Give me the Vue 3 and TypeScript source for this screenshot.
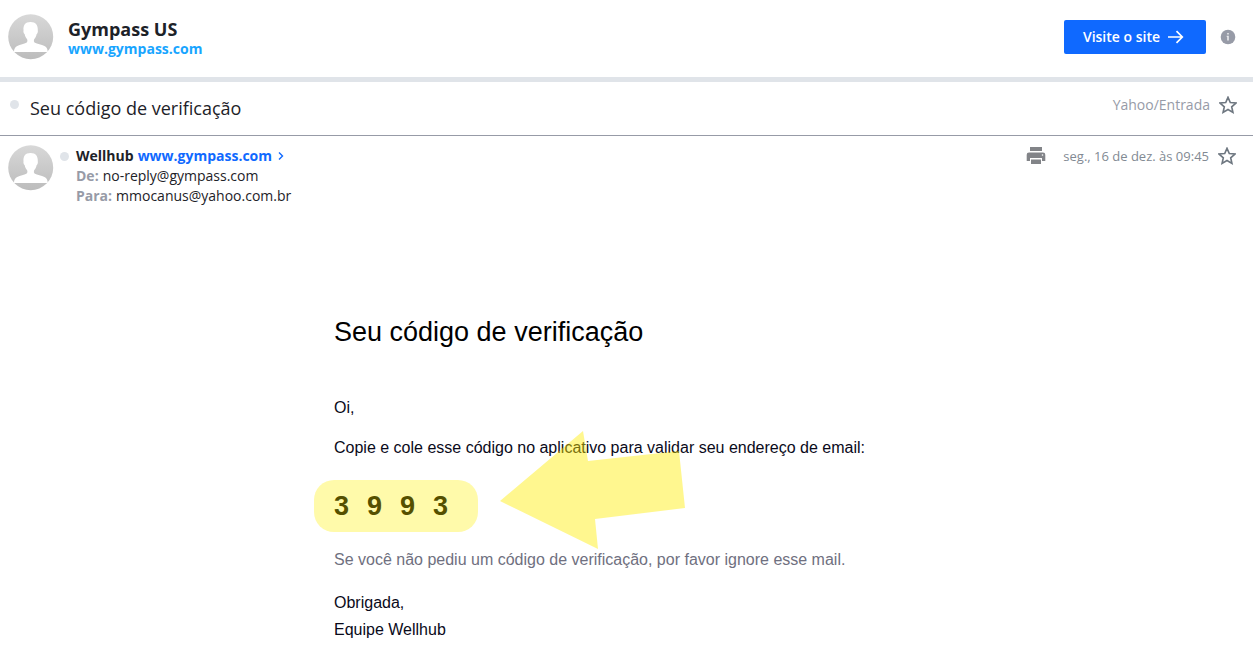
<script setup lang="ts">
const digits: string[] = ['3', '9', '9', '3']
const starPath =
  'M12 2.6l2.8 6.3 6.9.7-5.2 4.6 1.5 6.8-6-3.5-6 3.5 1.5-6.8-5.2-4.6 6.9-.7z'
</script>

<template>
  <main class="mail">
    <svg class="defs" width="0" height="0" aria-hidden="true">
      <defs>
        <linearGradient id="avatar-shade" x1="0" y1="0" x2="0" y2="1">
          <stop offset="0" stop-color="#d8d8d8" />
          <stop offset="1" stop-color="#bcbcbc" />
        </linearGradient>
        <symbol id="avatar" viewBox="0 0 46 46">
          <circle cx="22.7" cy="22.7" r="22.5" fill="url(#avatar-shade)" />
          <path
            d="M6 38c0-2.500.8-4.700 3.200-5.900 3-1.500 7-2.200 9.200-3.300 1.300-.7 1.200-2.600.6-3.800-1.300-1.200-2-2.900-2.300-4.700-1-.5-1.500-2.600-1.200-4C15.200 11.500 17 8 22.500 8s7.500 3.500 7.300 8.300c.3 1.400-.2 3.500-1.200 4-.3 1.800-1 3.500-2.300 4.700-.6 1.200-.7 3.100.6 3.800 2.200 1.100 6.600 1.800 9.600 3.300 2.400 1.200 3.200 3.400 3.200 5.900z"
            fill="#fff"
          />
        </symbol>
      </defs>
    </svg>

    <header class="brand">
      <svg class="avatar" aria-hidden="true"><use href="#avatar" /></svg>
      <div class="brand-text">
        <strong class="brand-name">Gympass US</strong>
        <a class="brand-link" href="#">www.gympass.com</a>
      </div>
      <button class="visit" type="button">
        Visite o site
        <svg width="16" height="14" viewBox="0 0 16 14" aria-hidden="true">
          <path d="M0 7h14M8.500 1.200L14.300 7l-5.800 5.800" fill="none" stroke="#fff" stroke-width="1.700" />
        </svg>
      </button>
      <button class="icon-button" type="button" aria-label="Informações">
        <svg width="16" height="16" viewBox="0 0 16 16" aria-hidden="true">
          <circle cx="8" cy="8" r="7.300" fill="#979ba7" />
          <path d="M7.200 4h1.600v1.600H7.200zM6.700 6.800h2.100v4.600H7.200V8h-.5z" fill="#e9eaed" />
        </svg>
      </button>
    </header>

    <section class="subject">
      <span class="dot"></span>
      <h1 class="subject-title">Seu código de verificação</h1>
      <span class="folder">Yahoo/Entrada</span>
      <button class="icon-button" type="button" aria-label="Marcar conversa">
        <svg width="18" height="18" viewBox="1 1 22 22" aria-hidden="true">
          <path :d="starPath" fill="none" stroke="#6e7780" stroke-width="2" />
        </svg>
      </button>
    </section>

    <section class="sender">
      <svg class="avatar" aria-hidden="true"><use href="#avatar" /></svg>
      <span class="dot"></span>
      <div class="sender-text">
        <div class="line">
          <strong>Wellhub</strong>
          <a class="sender-link" href="#">www.gympass.com</a>
          <svg class="chevron" width="6" height="10" viewBox="0 0 6 10" aria-hidden="true">
            <path d="M1 1.500L4.500 5 1 8.500" fill="none" stroke="#0f69ff" stroke-width="1.400" />
          </svg>
        </div>
        <div class="line"><b class="label">De:</b><span>no-reply@gympass.com</span></div>
        <div class="line"><b class="label">Para:</b><span>mmocanus@yahoo.com.br</span></div>
      </div>
      <div class="tools">
        <button class="icon-button print" type="button" aria-label="Imprimir">
          <svg width="20" height="18" viewBox="0 0 20 18" aria-hidden="true">
            <g fill="#828488">
              <path d="M4 0h12v4H4z" />
              <path d="M3 5.500h14a2.300 2.300 0 0 1 2.300 2.300V14H16v-3H4v3H.7V7.800A2.300 2.300 0 0 1 3 5.500z" />
              <path d="M5 12.500h10V17H5z" />
            </g>
            <circle cx="16.500" cy="8" r=".8" fill="#fff" />
          </svg>
        </button>
        <time class="date">seg., 16 de dez. às 09:45</time>
        <button class="icon-button" type="button" aria-label="Marcar mensagem">
          <svg width="18" height="18" viewBox="1 1 22 22" aria-hidden="true">
            <path :d="starPath" fill="none" stroke="#6e7780" stroke-width="2" />
          </svg>
        </button>
      </div>
    </section>

    <article class="message">
      <h2 class="title">Seu código de verificação</h2>
      <p class="greeting">Oi,</p>
      <p class="intro">Copie e cole esse código no aplicativo para validar seu endereço de email:</p>
      <div class="code">
        <span v-for="(digit, i) in digits" :key="i">{{ digit }}</span>
        <svg class="arrow" width="185" height="118" viewBox="0 0 185 118" aria-hidden="true">
          <path d="M0 70L83 0l5 30 91-10 6 57-90 11 3 30z" fill="#ffed00" fill-opacity=".44" />
        </svg>
      </div>
      <p class="note">Se você não pediu um código de verificação, por favor ignore esse mail.</p>
      <p class="sign">Obrigada,<br />Equipe Wellhub</p>
    </article>
  </main>
</template>

<style>
body {
  margin: 0;
  background: #fff;
}
</style>

<style scoped>
.mail {
  font-family: "Open Sans", "Noto Sans", sans-serif;
  font-size: 14px;
  line-height: 20px;
  color: #1d2228;
}
.defs {
  display: block;
}
.avatar {
  flex: none;
  width: 46px;
  height: 46px;
}
.brand {
  display: flex;
  align-items: center;
  box-sizing: border-box;
  height: 82px;
  padding: 0 17px 4px 8px;
  border-bottom: 5px solid #e0e4e9;
}
.brand-text {
  display: flex;
  flex-direction: column;
  margin: 4px auto 0 14px;
}
.brand-name {
  font-size: 18px;
}
.brand-link {
  font-weight: 700;
  color: #18a5ff;
  text-decoration: none;
}
.visit {
  display: flex;
  align-items: center;
  justify-content: center;
  gap: 8px;
  height: 34px;
  margin: 0 14px 0 0;
  padding: 0 22px 0 19px;
  border: 0;
  border-radius: 2px;
  background: #0f69ff;
  color: #fff;
  font: 600 14px "Open Sans", "Noto Sans", sans-serif;
}
.icon-button {
  display: flex;
  align-items: center;
  justify-content: center;
  padding: 0;
  border: 0;
  background: none;
}
.dot {
  flex: none;
  width: 9px;
  height: 9px;
  border-radius: 50%;
  background: #e0e4e9;
}
.subject {
  display: flex;
  align-items: center;
  box-sizing: border-box;
  height: 54px;
  padding: 0 16px 8px 10px;
  border-bottom: 1px solid #979ba7;
}
.subject-title {
  margin: 6px auto 0 11px;
  font-size: 18px;
  font-weight: 400;
}
.folder {
  margin-right: 9px;
  color: #979ba7;
}
.sender {
  display: flex;
  align-items: flex-start;
  padding: 9px 17px 0 8px;
}
.sender .dot {
  margin: 7px 7px 0 6px;
}
.sender-text {
  margin: 1px auto 0 0;
}
.line {
  display: flex;
  align-items: center;
  gap: 4px;
}
.sender-link {
  font-weight: 700;
  color: #0f69ff;
  text-decoration: none;
}
.chevron {
  margin-left: 2px;
}
.label {
  color: #979ba7;
}
.tools {
  display: flex;
  align-items: center;
  margin-top: 1px;
}
.print {
  margin-right: 17px;
}
.date {
  margin-right: 9px;
  font-size: 13px;
  color: #828a93;
}
.message {
  max-width: 585px;
  margin: 108px auto 0;
  font-family: "Liberation Sans", Arial, sans-serif;
  font-size: 16px;
  line-height: 26px;
  color: #0a0a1a;
}
.message p {
  margin: 0;
}
.title {
  margin: 0 0 45px;
  font-size: 27px;
  font-weight: 400;
  line-height: 36px;
  color: #000;
}
.message .greeting {
  margin-bottom: 14px;
}
.code {
  position: relative;
  display: flex;
  gap: 18px;
  box-sizing: border-box;
  width: 164px;
  margin: 19px 0 15px -20px;
  padding: 0 20px;
  border-radius: 20px;
  background: #fffaaa;
  font-size: 27px;
  font-weight: 700;
  line-height: 52px;
  color: #555000;
}
.arrow {
  position: absolute;
  top: -49px;
  left: 186px;
  pointer-events: none;
}
.message .note {
  margin-bottom: 16px;
  color: #6f7080;
}
.message .sign {
  line-height: 27px;
}
</style>
